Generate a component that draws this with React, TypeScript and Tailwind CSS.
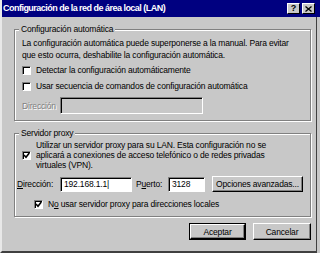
import { ReactNode } from 'react';

const face = 'bg-[#c8c8c8]';

function CheckBox({ checked, className = '' }: { checked?: boolean; className?: string }) {
  return (
    <span
      className={`flex-shrink-0 w-[9px] h-[9px] bg-white border border-t-[#808080] border-l-[#808080] border-r-white border-b-white shadow-[inset_1px_1px_0_#000] flex items-center justify-center ${className}`}
    >
      {checked && (
        <svg width="7" height="7" viewBox="0 0 7 7">
          <path d="M1 3 L3 5.2 L6.3 1" stroke="#000" strokeWidth="1.6" fill="none" />
        </svg>
      )}
    </span>
  );
}

function Group({ title, children, className = '' }: { title: string; children: ReactNode; className?: string }) {
  return (
    <fieldset
      className={`mx-[12px] w-[297px] border border-[#808080] shadow-[inset_1px_1px_0_#fff,1px_1px_0_#fff] ${className}`}
    >
      <legend className={`ml-[4px] px-[2px] leading-[11px] ${face}`}>{title}</legend>
      {children}
    </fieldset>
  );
}

function Btn({ children, def, className = '' }: { children: ReactNode; def?: boolean; className?: string }) {
  return (
    <div className={`${def ? 'border border-black' : ''} ${className}`}>
      <div className="h-full border border-t-white border-l-white border-r-black border-b-black shadow-[inset_-1px_-1px_0_#808080] flex items-center justify-center">
        {children}
      </div>
    </div>
  );
}

function Field({ value, disabled, className = '' }: { value?: string; disabled?: boolean; className?: string }) {
  return (
    <div
      className={`border border-t-[#808080] border-l-[#808080] border-r-white border-b-white shadow-[inset_1px_1px_0_#000] flex items-center pl-[3px] ${disabled ? face : 'bg-white'} ${className}`}
    >
      {value}
    </div>
  );
}

export default function App() {
  return (
    <div
      className={`w-[320px] h-[253px] overflow-hidden ${face} text-black text-[8.5px] leading-[12px] tracking-[-0.17px]`}
      style={{ fontFamily: '"Liberation Sans", Arial, sans-serif' }}
    >
      <div className="w-[317px] h-[253px] border-l-2 border-l-[#e8e8e8] border-r border-r-[#404040] border-b-2 border-b-[#404040] flex flex-col">
        {/* title bar */}
        <div className="h-[17px] bg-[#000080] flex items-center pl-[1px] pr-[1px] -mr-[4px]">
          <span className="text-white font-bold text-[9px] tracking-[-0.52px] leading-[17px] flex-1">
            Configuración de la red de área local (LAN)
          </span>
          <div className="flex gap-[2px] mr-[4px]">
            <div className="w-[13px] h-[11px] bg-[#c8c8c8] border border-t-white border-l-white border-r-black border-b-black flex items-center justify-center text-[9px] font-bold leading-none tracking-normal">
              ?
            </div>
            <div className="w-[13px] h-[11px] bg-[#c8c8c8] border border-t-white border-l-white border-r-black border-b-black flex items-center justify-center">
              <svg width="7" height="6" viewBox="0 0 7 6">
                <path d="M0.5 0.5 L6.5 5.5 M6.5 0.5 L0.5 5.5" stroke="#000" strokeWidth="1.3" />
              </svg>
            </div>
          </div>
        </div>

        <Group title="Configuración automática" className="mt-[7px] h-[97px]">
          <div className="pl-[7px] pt-[2px]">
            <p>La configuración automática puede superponerse a la manual. Para evitar</p>
            <p>que esto ocurra, deshabilite la configuración automática.</p>
            <div className="flex items-center gap-[5px] mt-[3px]">
              <CheckBox />
              <span>Detectar la configuración automáticamente</span>
            </div>
            <div className="flex items-center gap-[5px] mt-[4px]">
              <CheckBox />
              <span>Usar secuencia de comandos de configuración automática</span>
            </div>
            <div className="flex items-center gap-[4px] mt-[5px]">
              <span className="text-[#808080] [text-shadow:1px_1px_0_#fff]">Dirección</span>
              <Field disabled className="w-[143px] h-[17px]" />
            </div>
          </div>
        </Group>

        <Group title="Servidor proxy" className="mt-[7px] h-[89px]">
          <div className="pl-[7px] pt-[1px]">
            <div className="flex items-center gap-[5px]">
              <CheckBox checked />
              <p className="leading-[10px]">
                Utilizar un servidor proxy para su LAN. Esta configuración no se
                <br />
                aplicará a conexiones de acceso telefónico o de redes privadas
                <br />
                virtuales (VPN).
              </p>
            </div>
            <div className="flex items-center mt-[6px] -ml-[5px] h-[16px]">
              <span className="w-[43px]">
                <u>D</u>irección:
              </span>
              <Field value="192.168.1.1|" className="w-[72px] h-[15px]" />
              <span className="ml-[4px] w-[32px]">
                P<u>u</u>erto:
              </span>
              <Field value="3128" className="w-[37px] h-[15px]" />
              <Btn className="ml-[7px] w-[91px] h-[16px]">Opciones avanzadas...</Btn>
            </div>
            <div className="flex items-center gap-[5px] mt-[6px] ml-[12px]">
              <CheckBox checked />
              <span>
                N<u>o</u> usar servidor proxy para direcciones locales
              </span>
            </div>
          </div>
        </Group>

        <div className="flex justify-end gap-[7px] mt-[6px] mr-[5px]">
          <Btn def className="w-[57px] h-[17px]">Aceptar</Btn>
          <Btn className="w-[58px] h-[17px]">Cancelar</Btn>
        </div>
      </div>
    </div>
  );
}
